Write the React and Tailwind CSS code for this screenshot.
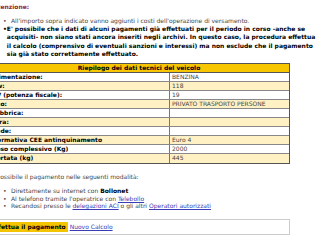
import React from "react";

const rows = [
  ["Alimentazione:", "BENZINA"],
  ["Kw:", "118"],
  ["CV (potenza fiscale):", "19"],
  ["Uso:", "PRIVATO TRASPORTO PERSONE"],
  ["Fabbrica:", ""],
  ["Tara:", ""],
  ["Sede:", ""],
  ["Normativa CEE antinquinamento", "Euro 4"],
  ["Peso complessivo (Kg)", "2000"],
  ["Portata (kg)", "445"],
];

export default function App() {
  return (
    <div className="w-[320px] h-[240px] overflow-hidden bg-white font-['DejaVu_Sans',sans-serif] text-[6px] text-[#444]">
      <div className="ml-[-12px] w-[302px]">
        <div className="pl-[2px] pt-[3px] leading-[8px] font-bold text-[#9b1c1c]">Attenzione:</div>
        <ul className="mt-[6px] pl-[15px] leading-[8.2px]">
          <li className="flex">
            <span className="w-[8px]">•</span>
            <span className="whitespace-nowrap">All'importo sopra indicato vanno aggiunti i costi dell'operazione di versamento.</span>
          </li>
          <li className="flex font-bold text-black">
            <span className="w-[8px]">•</span>
            <span className="whitespace-nowrap">
              <span className="block">E' possibile che i dati di alcuni pagamenti già effettuati per il periodo in corso -anche se</span>
              <span className="block">acquisiti- non siano stati ancora inseriti negli archivi. In questo caso, la procedura effettua</span>
              <span className="block">il calcolo (comprensivo di eventuali sanzioni e interessi) ma non esclude che il pagamento</span>
              <span className="block">sia già stato correttamente effettuato.</span>
            </span>
          </li>
        </ul>
        <div className="mt-[5px] border border-[#555]">
          <div className="h-[9px] bg-[#f7c600] border-b border-[#555] text-center font-bold text-black leading-[8px]">
            Riepilogo dei dati tecnici del veicolo
          </div>
          {rows.map(([label, value], i) => (
            <div
              key={i}
              className={`grid grid-cols-[181px_1fr] h-[9px] leading-[8px] ${i < rows.length - 1 ? "border-b border-[#888]" : ""} ${i % 2 === 1 ? "bg-[#fff1c4]" : "bg-white"}`}
            >
              <div className="pl-[3px] font-bold text-black whitespace-nowrap border-r border-[#777]">{label}</div>
              <div className="pl-[2px] whitespace-nowrap">{value}</div>
            </div>
          ))}
        </div>
        <div className="mt-[9px] pl-[1px] leading-[8px] whitespace-nowrap">E' possibile il pagamento nelle seguenti modalità:</div>
        <ul className="mt-[6px] pl-[15px] leading-[7.6px] whitespace-nowrap">
          <li className="flex">
            <span className="w-[8px]">•</span>
            <span>Direttamente su internet con <b className="text-black">Bollonet</b></span>
          </li>
          <li className="flex">
            <span className="w-[8px]">•</span>
            <span>Al telefono tramite l'operatrice con <a className="underline text-[#3b3bb5]" href="#">Telebollo</a></span>
          </li>
          <li className="flex">
            <span className="w-[8px]">•</span>
            <span>
              Recandosi presso le <a className="underline text-[#3b3bb5]" href="#">delegazioni ACI</a> o gli altri{" "}
              <a className="underline text-[#3b3bb5]" href="#">Operatori autorizzati</a>
            </span>
          </li>
        </ul>
        <div className="mt-[9px] h-[16px] border border-[#ccc] flex items-center pl-[1px] gap-[2px]">
          <span className="bg-[#f5c400] font-bold text-black px-[2px] leading-[10px] whitespace-nowrap">Effettua il pagamento</span>
          <a className="underline text-[#3b3bb5] whitespace-nowrap" href="#">Nuovo Calcolo</a>
        </div>
      </div>
    </div>
  );
}
